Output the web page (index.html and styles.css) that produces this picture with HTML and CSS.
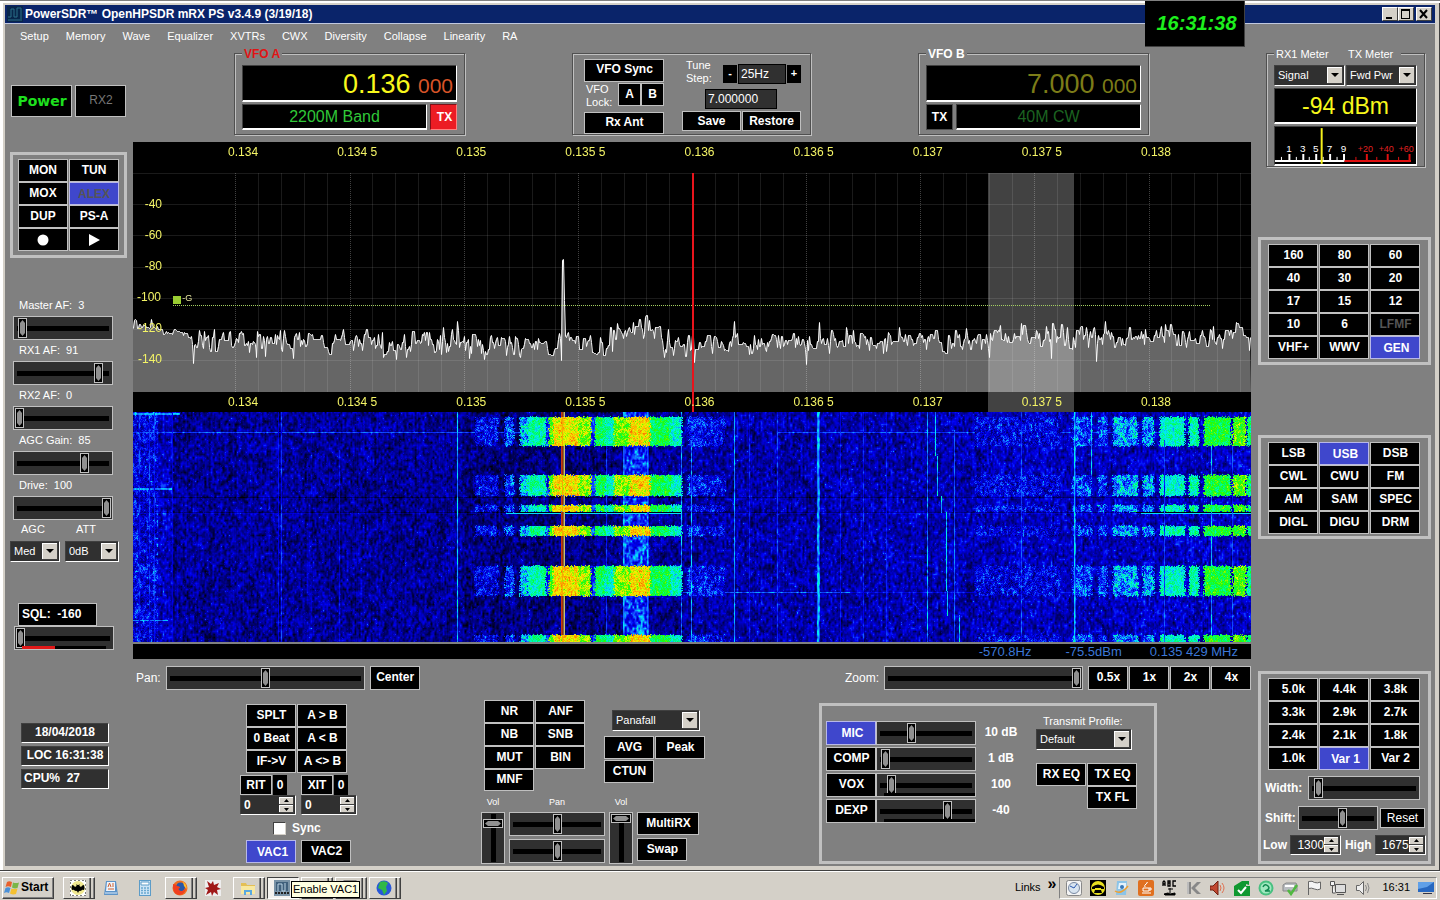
FILE: index.html
```html
<!DOCTYPE html>
<html lang="en">
<head>
<meta charset="utf-8">
<title>PowerSDR OpenHPSDR mRX PS v3.4.9</title>
<link rel="stylesheet" href="styles.css">
</head>
<body>
<div class="window">
  <header class="titlebar">
    <svg class="appicon" viewBox="0 0 16 16"><rect width="16" height="16" fill="#08254a"/><path d="M1 11h3V3h3v8h3V2h4v11" fill="none" stroke="#2a7088"/><path d="M1 14h14" stroke="#2a7088"/></svg>
    <h1>PowerSDR™ OpenHPSDR mRX PS v3.4.9 (3/19/18)</h1>
    <div class="winbtns">
      <button aria-label="Minimize"><svg viewBox="0 0 13 12"><path d="M3 9h6v2H3z"/></svg></button>
      <button aria-label="Maximize"><svg viewBox="0 0 13 12"><path d="M2 1h9v10H2zM3 3v7h7V3z" fill-rule="evenodd"/></svg></button>
      <button class="close" aria-label="Close"><svg viewBox="0 0 13 12"><path d="M3 2l7 8M10 2l-7 8" stroke="#000" stroke-width="2"/></svg></button>
    </div>
    <div class="clock">16:31:38</div>
  </header>
  <div class="client">
    <nav class="menu"><a href="#">Setup</a><a href="#">Memory</a><a href="#">Wave</a><a href="#">Equalizer</a><a href="#">XVTRs</a><a href="#">CWX</a><a href="#">Diversity</a><a href="#">Collapse</a><a href="#">Linearity</a><a href="#">RA</a></nav>

    <aside class="left">
      <div class="powerrow"><button class="b power">Power</button><button class="b rx2">RX2</button></div>
      <div class="panel leftpanel"><div class="grid two">
        <button class="b">MON</button><button class="b">TUN</button>
        <button class="b">MOX</button><button class="b on dim">ALEX</button>
        <button class="b">DUP</button><button class="b">PS-A</button>
        <button class="b" aria-label="Record"><svg width="12" height="12"><circle cx="6" cy="6" r="5.5" fill="#fff"/></svg></button><button class="b" aria-label="Play"><svg width="12" height="12"><path d="M1 0l11 6-11 6z" fill="#fff"/></svg></button>
      </div></div>
      <div class="sliders">
        <label for="maf">Master AF:&nbsp; 3</label><input id="maf" type="range" value="3">
        <label for="r1af">RX1 AF:&nbsp; 91</label><input id="r1af" type="range" value="91">
        <label for="r2af">RX2 AF:&nbsp; 0</label><input id="r2af" type="range" value="0">
        <label for="agcg">AGC Gain:&nbsp; 85</label><input id="agcg" type="range" min="-20" max="120" value="85">
        <label for="drv">Drive:&nbsp; 100</label><input id="drv" type="range" value="100">
      </div>
      <div class="agc">
        <label>AGC<select><option>Med</option></select></label>
        <label>ATT<select><option>0dB</option></select></label>
      </div>
      <div class="sql">
        <button class="b">SQL:&nbsp; -160</button>
        <div class="levelwrap"><input type="range" aria-label="Squelch" value="0"><i class="level"></i></div>
      </div>
      <div class="status"><output class="mid">18/04/2018</output><output class="mid">LOC 16:31:38</output><output>CPU%&nbsp; 27</output></div>
    </aside>

    <main class="center">
      <div class="vforow">
        <section class="group vfo">
          <span class="legend red">VFO A</span>
          <div class="lcd freq">0.136 <small>000</small></div>
          <div class="bandrow"><div class="lcd band">2200M Band</div><button class="b tx hot">TX</button></div>
        </section>
        <section class="group tune">
          <div class="tleft">
            <button class="b">VFO Sync</button>
            <div class="lock"><span>VFO<br>Lock:</span><button class="b">A</button><button class="b">B</button></div>
            <button class="b rxant">Rx Ant</button>
          </div>
          <div class="tright">
            <div class="step"><label for="stp">Tune<br>Step:</label><button class="b">-</button><input id="stp" value="25Hz"><button class="b">+</button></div>
            <input class="mem" aria-label="Memory frequency" value="7.000000">
            <div class="save"><button class="b">Save</button><button class="b">Restore</button></div>
          </div>
        </section>
        <section class="group vfo vfob">
          <span class="legend">VFO B</span>
          <div class="lcd freq">7.000 <small>000</small></div>
          <div class="bandrow"><button class="b tx">TX</button><div class="lcd band">40M CW</div></div>
        </section>
      </div>

      <div class="scope">
        <canvas id="spectrum" width="1118" height="270"></canvas>
        <div class="overlay">
          <div class="axis"><span>0.134</span><span>0.134 5</span><span>0.135</span><span>0.135 5</span><span>0.136</span><span>0.136 5</span><span>0.137</span><span>0.137 5</span><span>0.138</span></div>
          <div class="dbs"><span>-40</span><span>-60</span><span>-80</span><span>-100 <em>-G</em></span><span>-120</span><span>-140</span></div>
          <div class="axis low"><span>0.134</span><span>0.134 5</span><span>0.135</span><span>0.135 5</span><span>0.136</span><span>0.136 5</span><span>0.137</span><span>0.137 5</span><span>0.138</span></div>
        </div>
      </div>
      <canvas id="waterfall" width="1118" height="230"></canvas>
      <div class="readout"><span>-570.8Hz</span><span>-75.5dBm</span><span>0.135 429 MHz</span></div>

      <div class="panrow">
        <label for="pan">Pan:</label><input id="pan" type="range"><button class="b">Center</button>
        <label class="zoomlabel" for="zoom">Zoom:</label><input id="zoom" type="range" value="100">
        <div class="zoombtns"><button class="b">0.5x</button><button class="b">1x</button><button class="b">2x</button><button class="b">4x</button></div>
      </div>

      <div class="bottom">
        <section class="split">
          <div class="grid two">
            <button class="b">SPLT</button><button class="b">A &gt; B</button>
            <button class="b">0 Beat</button><button class="b">A &lt; B</button>
            <button class="b">IF-&gt;V</button><button class="b">A &lt;&gt; B</button>
          </div>
          <div class="rits">
            <div><button class="b">RIT</button><button class="b zero">0</button><input class="spin" aria-label="RIT" value="0"></div>
            <div><button class="b">XIT</button><button class="b zero">0</button><input class="spin" aria-label="XIT" value="0"></div>
          </div>
          <label class="sync"><input type="checkbox">Sync</label>
          <div class="vacs"><button class="b on">VAC1</button><button class="b">VAC2</button></div>
        </section>

        <section class="dsp">
          <div class="dsptop">
            <div class="grid two nr">
              <button class="b">NR</button><button class="b">ANF</button>
              <button class="b">NB</button><button class="b">SNB</button>
              <button class="b">MUT</button><button class="b">BIN</button>
              <button class="b">MNF</button>
            </div>
            <div class="disp">
              <select aria-label="Display mode"><option>Panafall</option></select>
              <div class="grid two"><button class="b">AVG</button><button class="b">Peak</button><button class="b">CTUN</button></div>
            </div>
          </div>
          <div class="multi">
            <div class="col"><label for="v1">Vol</label><input id="v1" class="vert" type="range" value="86"></div>
            <div class="col pans"><label for="p1">Pan</label><input id="p1" type="range"><input type="range" aria-label="Sub pan"></div>
            <div class="col"><label for="v2">Vol</label><input id="v2" class="vert" type="range" value="100"></div>
            <div class="col swap"><button class="b">MultiRX</button><button class="b">Swap</button></div>
          </div>
        </section>

        <section class="panel txpanel">
          <div class="mics">
            <button class="b on">MIC</button><input type="range" aria-label="Mic gain" value="33"><output>10 dB</output>
            <button class="b">COMP</button><input type="range" aria-label="Compression" value="4"><output>1 dB</output>
            <button class="b">VOX</button><div class="levelwrap"><input type="range" aria-label="VOX level" value="10"><i class="level plain"></i></div><output>100</output>
            <button class="b">DEXP</button><div class="levelwrap"><input type="range" aria-label="Expander level" value="75"><i class="level plain"></i></div><output>-40</output>
          </div>
          <div class="profile">
            <label for="prof">Transmit Profile:</label>
            <select id="prof"><option>Default</option></select>
            <div class="grid two"><button class="b">RX EQ</button><button class="b">TX EQ</button><button class="b second">TX FL</button></div>
          </div>
        </section>
      </div>
    </main>

    <aside class="right">
      <section class="group meter">
        <span class="legend thin">RX1 Meter</span><span class="legend thin txm">TX Meter</span>
        <div class="selrow"><select aria-label="RX1 Meter"><option>Signal</option></select><select aria-label="TX Meter"><option>Fwd Pwr</option></select></div>
        <div class="lcd dbm">-94 dBm</div>
        <div class="lcd gauge">
          <svg viewBox="0 0 142 37">
            <path d="M0 34h70M14.500 34v-7M28.500 34v-7M41.500 34v-7M55.500 34v-7M69.500 34v-7" stroke="#fff" stroke-width="2"/>
            <path d="M6.500 34v-4M21.500 34v-4M34.500 34v-4M48.500 34v-4M62.500 34v-4" stroke="#fff"/>
            <path d="M70 34h67M92.500 34v-7M113.500 34v-7M135.500 34v-7" stroke="#e01010" stroke-width="2"/>
            <path d="M81.500 34v-4M102.500 34v-4M124.500 34v-4" stroke="#e01010"/>
            <g class="w"><text x="14" y="25">1</text><text x="28" y="25">3</text><text x="41" y="25">5</text><text x="55" y="25">7</text><text x="69" y="25">9</text></g>
            <g class="r"><text x="91" y="25">+20</text><text x="112" y="25">+40</text><text x="132" y="25">+60</text></g>
            <path d="M47 1v36" stroke="#f4f01c" stroke-width="2"/>
          </svg>
        </div>
      </section>
      <div class="panel bands"><div class="grid three">
        <button class="b">160</button><button class="b">80</button><button class="b">60</button>
        <button class="b">40</button><button class="b">30</button><button class="b">20</button>
        <button class="b">17</button><button class="b">15</button><button class="b">12</button>
        <button class="b">10</button><button class="b">6</button><button class="b dim">LFMF</button>
        <button class="b">VHF+</button><button class="b">WWV</button><button class="b on">GEN</button>
      </div></div>
      <div class="panel modes"><div class="grid three">
        <button class="b">LSB</button><button class="b on">USB</button><button class="b">DSB</button>
        <button class="b">CWL</button><button class="b">CWU</button><button class="b">FM</button>
        <button class="b">AM</button><button class="b">SAM</button><button class="b">SPEC</button>
        <button class="b">DIGL</button><button class="b">DIGU</button><button class="b">DRM</button>
      </div></div>
      <div class="panel filters"><div class="grid three">
        <button class="b">5.0k</button><button class="b">4.4k</button><button class="b">3.8k</button>
        <button class="b">3.3k</button><button class="b">2.9k</button><button class="b">2.7k</button>
        <button class="b">2.4k</button><button class="b">2.1k</button><button class="b">1.8k</button>
        <button class="b">1.0k</button><button class="b on">Var 1</button><button class="b">Var 2</button>
      </div>
        <div class="frow width"><label for="wid">Width:</label><input id="wid" type="range" value="4"></div>
        <div class="frow shift"><label for="shf">Shift:</label><input id="shf" type="range" value="56"><button class="b reset">Reset</button></div>
        <div class="frow lohi"><label for="lo">Low</label><input id="lo" class="spin" value="1300"><label for="hi">High</label><input id="hi" class="spin" value="1675"></div>
      </div>
    </aside>
  </div>
</div>

<footer class="taskbar">
  <button class="task start"><svg viewBox="0 0 16 16"><path d="M3 2q2-1.500 5 0L7 7Q4 5.500 1.500 7z" fill="#e8602c"/><path d="M9 2.500q3 1 6 0L13.500 8q-3 1-5.500-.5z" fill="#7ab648"/><path d="M1.500 8q2.500-1.500 5 0L5 13q-2.500-1.500-5 0z" fill="#4a90d8"/><path d="M7.500 8.500q3 1 6 0L12 14q-3 1-6-.5z" fill="#f4c030"/></svg>Start</button>
  <div class="tasks">
    <button class="task stack" aria-label="Batman"><svg viewBox="0 0 16 16"><rect width="16" height="16" fill="#fff" stroke="#000" stroke-dasharray="2 2"/><circle cx="8" cy="8" r="7" fill="#f0e890"/><path d="M2 5q2 0 3 2l1.500-1V4l1 1h1l1-1v2L11 7q1-2 3-2 1 3 0 5-2-1-3 1-2-1-3 2-1-3-3-2-1-2-3-1-1-2 0-5z"/></svg></button>
    <button class="flat" aria-label="WordPad"><svg viewBox="0 0 16 16"><path d="M3 1h10l2 14H1z" fill="#5c93c8"/><path d="M4 2h8v9H3z" fill="#eef4fb"/><path d="M5 7l1.500-4L8 7M9 4h2M9 6h2M5 9h6" stroke="#d06030" fill="none"/><path d="M2 13h12" stroke="#dcebfa"/></svg></button>
    <button class="flat" aria-label="Calculator"><svg viewBox="0 0 16 16"><rect x="2.500" y=".5" width="11" height="15" fill="#cde4f5" stroke="#5c9cc8"/><path d="M4 2h8v3H4z" fill="#fff" stroke="#5c9cc8"/><path d="M4 8h8M4 10.500h8M4 13h8" stroke="#6aa8d0" stroke-width="1.500" stroke-dasharray="2 1"/></svg></button>
    <button class="task stack" aria-label="Firefox"><svg viewBox="0 0 16 16"><circle cx="8" cy="8" r="7.500" fill="#f07020"/><circle cx="8.500" cy="7" r="4.500" fill="#2858a8"/><path d="M1 4q3 0 4 2 3 0 3 2-2 0-1 2 3 3 7-2-1 7-7 7Q0 14 1 4z" fill="#f04020"/><path d="M10 1q5 3 4.500 8L12 6q0-3-2-5z" fill="#fcc030"/></svg></button>
    <button class="flat" aria-label="IrfanView"><svg viewBox="0 0 16 16"><rect width="16" height="16" fill="#eee"/><path d="M2 1l4 3 2-3 1 4 5-2-2 4 4 2-4 1 1 5-4-3-2 4-1-4-5 3 2-5-3-2 4-1z" fill="#a01818"/></svg></button>
    <button class="task stack" aria-label="Explorer"><svg viewBox="0 0 16 16"><path d="M1 3h5l1 2h8v9H1z" fill="#e4bf55"/><path d="M1 6h14v8H1z" fill="#f8e8a0"/><path d="M4 15v-5h8v5h-2v-3H6v3z" fill="#58a8e0"/></svg></button>
    <button class="task pressed" aria-label="PowerSDR"><svg viewBox="0 0 16 16"><rect width="16" height="16" fill="#7a93a6"/><path d="M2 2h12v9H2z" fill="#40607c"/><path d="M4 11V4h4v7h3V3" stroke="#bcd4e4" fill="none"/><path d="M1 13h14" stroke="#222" stroke-width="2" stroke-dasharray="2 1"/></svg></button>
    <button class="task stack" aria-label="Google Earth"><svg viewBox="0 0 16 16"><circle cx="8" cy="8" r="7" fill="#1030a0"/><path d="M3 3q5-3 7 0l-3 4z" fill="#28a828"/></svg></button>
    <button class="task stack" aria-label="Help"><svg viewBox="0 0 16 16"><rect x="2" y="1" width="12" height="14" fill="#fff" stroke="#333"/><path d="M6 5q2-2 4 0t-2 4" stroke="#000" stroke-width="1.500" fill="none"/></svg></button>
    <button class="task stack" aria-label="Browser"><svg viewBox="0 0 16 16"><circle cx="8" cy="8" r="7.500" fill="#2858d8"/><path d="M4 2q5-2 8 1l-2 4 1 4-3 4-2-5-4-2z" fill="#30b848"/></svg></button>
    <span class="tip" role="tooltip">Enable VAC1</span>
  </div>
  <a class="links" href="#">Links</a><b class="chev">»</b>
  <div class="tray">
    <svg viewBox="0 0 16 16"><rect x=".5" y=".5" width="15" height="15" rx="2" fill="#f4f4f4" stroke="#888"/><circle cx="8" cy="8" r="5.500" fill="#d8e4f0" stroke="#7888a0"/><path d="M8 8l3-4M8 8L4 6" stroke="#2858b0"/></svg>
    <svg viewBox="0 0 16 16"><rect width="16" height="16"/><circle cx="8" cy="8" r="7" fill="#e8e020"/><path d="M2 7q6-5 12 0v2h-3V8H5v1H2zM5 10h6l1 3H4z"/></svg>
    <svg viewBox="0 0 16 16"><path d="M3 1h10l-1 14H2z" fill="#8cc4e8"/><path d="M5 3h7v6H4z" fill="#e4f2fc"/><path d="M1 11q6 4 13-5" stroke="#f0a030" stroke-width="1.500" fill="none"/><circle cx="8" cy="7" r="2" fill="#3878b8"/></svg>
    <svg viewBox="0 0 16 16"><rect width="16" height="16" rx="2" fill="#e07020"/><path d="M5 8h6v3H5zM11 8h2v2h-2M4 13h9M7 7q-1-2 1-3t1-2" stroke="#fff" fill="none"/></svg>
    <svg viewBox="0 0 16 16"><path d="M1 6V2l1-1 1 1v4M1 4h2M6 1v5h2V1zM6 3h2M14 1h-3v5h3" stroke="#000" fill="none" stroke-width="1.300"/><path d="M8 8v5M6 9h5M2 14l4-1 2 1 5-1v2H3z" stroke="#000"/></svg>
    <svg viewBox="0 0 16 16"><path d="M1 2h4v12H1zM5 8l6-6h4L9 8l6 6h-4z" fill="#888"/><path d="M1 2h2v12H1z" fill="#bbb"/></svg>
    <svg viewBox="0 0 16 16"><path d="M0 6h3l5-5v14l-5-5H0z" fill="#c04830" stroke="#702010"/><path d="M10 5q2 3 0 6M12 3q4 5 0 10" stroke="#e07050" fill="none"/></svg>
    <svg viewBox="0 0 16 16"><path d="M0 6l8-5h7v4l-3-1v2h4v10H0z" fill="#109830"/><path d="M4 10l3 3 5-6" stroke="#fff" stroke-width="2" fill="none"/></svg>
    <svg viewBox="0 0 16 16"><circle cx="8" cy="8" r="7.500" fill="#48c080"/><circle cx="8" cy="8" r="5.500" fill="#a0e8c0"/><path d="M5 7q2-4 5-1t-3 5h5" stroke="#108850" stroke-width="1.500" fill="none"/></svg>
    <svg viewBox="0 0 16 16"><path d="M1 5l3-2h10l1 2v6H1z" fill="#b8bcc0" stroke="#888"/><path d="M3 6h9" stroke="#fff" stroke-width="2"/><path d="M6 10l3 4 6-9" stroke="#50b840" stroke-width="2.500" fill="none"/></svg>
    <svg viewBox="0 0 16 16"><path d="M2.500 15V1.500q4-1 6 1 3 1 6-.5v7q-3 1.500-6 0-3-1.500-6-.5" fill="#f4f4f4" stroke="#666"/></svg>
    <svg viewBox="0 0 16 16"><path d="M5.500 4.500h10v8h-10zM7 14.500h7" fill="#ddd" stroke="#555"/><path d="M.5 1.500h4v4h-4zM2.500 5v8h3" fill="#f4f4f4" stroke="#555"/></svg>
    <svg viewBox="0 0 16 16"><path d="M2.500 5.500h3l4-4v13l-4-4h-3z" fill="#eee" stroke="#666"/><path d="M11.500 5q2 3 0 6M13.500 3q3 5 0 10" stroke="#888" fill="none"/></svg>
    <time>16:31</time>
    <svg viewBox="0 0 16 16"><path d="M0 2h16v10H0z" fill="#2868c0"/><path d="M0 2h16l-7 5-9 2z" fill="#60a0e8"/><path d="M5 13h9v1H5z" fill="#334"/></svg>
  </div>
</footer>
<script src="scope.js"></script>
</body>
</html>
```
FILE: styles.css
```css
* { box-sizing: border-box; }
body {
  margin: 0; min-height: 100vh; display: flex; flex-direction: column;
  background: #d4d0c8; color: #fff; overflow: hidden;
  font: 12px/13px "Liberation Sans", Arial, sans-serif;
}
button, input, select, output { font: inherit; color: inherit; margin: 0; }
a { color: inherit; text-decoration: none; }

.window {
  flex: 1; padding: 5px 5px 4px; display: flex; flex-direction: column; background: #d4d0c8;
  border-bottom: 1px solid #404040;
  box-shadow: inset 0 1px #808080, inset 3px 3px #fff, inset -1px 0 #404040;
}
.titlebar { position: relative; display: flex; align-items: center; height: 19px; background: #0a246a; border-bottom: 1px solid #c0c8e0; padding: 0 3px 0 2px; }
.titlebar h1 { flex: 1; margin: 0 0 0 2px; font: bold 12px/18px "Liberation Sans", Arial, sans-serif; }
.appicon { width: 16px; height: 16px; }
.winbtns { display: flex; }
.winbtns button { width: 16px; height: 14px; padding: 0; background: #d4d0c8; border: 1px solid; border-color: #fff #404040 #404040 #fff; }
.winbtns .close { margin-left: 2px; }
.winbtns svg { display: block; width: 13px; height: 12px; }
.clock {
  position: absolute; top: -4px; right: 190px; width: 100px; height: 46px; padding-left: 4px;
  background: #000; border: 1px solid #404040; border-width: 0 1px 1px 0; color: #1df01d; text-align: center;
  font: italic bold 20px/44px "Liberation Sans", Arial, sans-serif;
}

.client { flex: 1; display: grid; grid-template-columns: 128px 1fr 184px; grid-template-rows: 24px 1fr; background: #808080; }
.menu { grid-column: 1 / -1; display: flex; gap: 17px; padding: 5px 15px; font-size: 11px; line-height: 14px; }

.b {
  height: 23px; padding: 0 0 1px 1px; border: 1px solid #c0c0c0; border-radius: 0;
  background: #000; color: #fff; font-weight: bold; white-space: nowrap; overflow: hidden;
}
.b svg { display: block; margin: 1px auto 0; }
.b.on { background: #3f47cc; border-color: #b8b8e8; padding: 1px 0 0 3px; }
.b.dim { color: #555; }
.grid { display: grid; column-gap: 1px; grid-auto-rows: 23px; }
.two { grid-template-columns: 50px 50px; }
.three { grid-template-columns: repeat(3, 50px); }
.second { grid-column: 2; }
.panel { border: 3px solid #c0c0c0; }
.group { position: relative; border: 1px solid #505050; box-shadow: 1px 1px #c0c0c0, inset 1px 1px #c0c0c0; }
.legend { position: absolute; top: -6px; left: 7px; padding: 0 2px; background: #808080; font-weight: bold; }
.legend.red { color: #e01414; }
.legend.thin { font-weight: normal; font-size: 11px; }
.lcd { background: #000; border: 1px solid; border-color: #404040 #fff #fff #404040; border-bottom-width: 2px; }

select {
  appearance: none; height: 21px; padding: 0 20px 0 3px; border: 1px solid; border-color: #404040 #fff #fff #404040; border-radius: 0;
  background: #303030 url("data:image/svg+xml,%3Csvg xmlns='http://www.w3.org/2000/svg' width='16' height='17'%3E%3Cpath fill='%23404040' d='M0 0h16v17H0z'/%3E%3Cpath fill='%23fff' d='M0 0h15v16H0z'/%3E%3Cpath fill='%23d4d0c8' d='M1 1h14v15H1z'/%3E%3Cpath d='M4 6h8L8 10z'/%3E%3C/svg%3E") right 1px center no-repeat;
  font-size: 11px;
}
.spin {
  height: 20px; width: 56px; padding: 0 18px 0 3px; border: 1px solid; border-color: #404040 #fff #fff #404040;
  background: #303030 url("data:image/svg+xml,%3Csvg xmlns='http://www.w3.org/2000/svg' width='15' height='16'%3E%3Cpath fill='%23404040' d='M0 0h15v8H0zM0 8h15v8H0z'/%3E%3Cpath fill='%23fff' d='M0 0h14v7H0zM0 8h14v7H0z'/%3E%3Cpath fill='%23d4d0c8' d='M1 1h13v6H1zM1 9h13v6H1z'/%3E%3Cpath d='M5 5h5L7.500 2zM5 11h5l-2.500 3z'/%3E%3C/svg%3E") right 1px center no-repeat;
}

input[type="range"] { appearance: none; height: 24px; width: 100px; padding: 0 1px; border: 1px solid #c0c0c0; background: #303030; display: block; }
input[type="range"]::-webkit-slider-runnable-track { height: 5px; background: linear-gradient(90deg, #303030 2px, #000 2px, #000 calc(100% - 2px), #303030 calc(100% - 2px)); }
input[type="range"]::-webkit-slider-thumb {
  appearance: none; width: 9px; height: 20px; margin-top: -8px; border: 1px solid #c0c0c0; border-radius: 0;
  background: #000 url("data:image/svg+xml,%3Csvg xmlns='http://www.w3.org/2000/svg' width='5' height='16'%3E%3Cpath fill='%23909090' d='M0 3l2.500-3L5 3v10l-2.500 3L0 13z'/%3E%3C/svg%3E") center no-repeat;
}
input[type="range"].vert { writing-mode: vertical-lr; direction: rtl; width: 24px; height: 52px; padding: 1px 0; }
input[type="range"].vert::-webkit-slider-runnable-track { width: 5px; height: auto; background: #000; }
input[type="range"].vert::-webkit-slider-thumb {
  width: 20px; height: 9px; margin: 0 0 0 -8px;
  background: #000 url("data:image/svg+xml,%3Csvg xmlns='http://www.w3.org/2000/svg' width='16' height='5'%3E%3Cpath fill='%23909090' d='M3 0L0 2.500 3 5h10l3-2.500L13 0z'/%3E%3C/svg%3E") center no-repeat;
}
.levelwrap { position: relative; }
.level { position: absolute; left: 8px; right: 8px; bottom: 1px; height: 3px; background: linear-gradient(90deg, #e01818 33px, #000 33px); }
.level.plain { right: 1px; background: #000; }

.left { padding: 37px 0 0 5px; display: flex; flex-direction: column; align-items: flex-start; }
.powerrow { display: flex; gap: 3px; padding-left: 1px; }
.powerrow .b { height: 32px; width: 51px; color: #777; font-weight: normal; }
.powerrow .power { width: 61px; color: #1ee01e; font: bold 14px "DejaVu Sans", Verdana, sans-serif; }
.leftpanel { margin: 35px 0 37px; padding: 4px 5px; width: 117px; }
.leftpanel .b { padding-left: 0; }
.sliders { display: flex; flex-direction: column; padding-left: 3px; font-size: 11px; }
.sliders label { padding: 4px 0 2px 6px; height: 21px; }
.agc { display: flex; gap: 5px; margin-top: 2px; font-size: 11px; }
.agc label { display: flex; flex-direction: column; gap: 5px; padding-top: 1px; text-indent: 11px; }
.agc select { width: 50px; text-indent: 0; }
.agc label + label select { width: 54px; }
.sql { margin: 41px 0 73px 4px; }
.sql .b { width: 79px; margin-left: 4px; display: block; text-align: left; padding-left: 3px; }
.status { display: flex; flex-direction: column; gap: 3px; margin-left: 11px; font-weight: bold; }
.status output { width: 88px; height: 20px; padding: 2px; background: #303030; border: 1px solid; border-color: #404040 #fff #fff #404040; white-space: nowrap; }
.status .mid { text-align: center; padding: 2px 0; }

.center { min-width: 0; display: flex; flex-direction: column; }
.vforow { display: flex; justify-content: space-between; padding: 5px 102px 0 101px; height: 94px; }
.vforow .group { height: 82px; }
.vfo { width: 231px; padding: 11px 7px 0; }
.freq { height: 37px; padding-right: 3px; text-align: right; font-size: 27px; line-height: 37px; color: #f8f81c; white-space: nowrap; }
.freq small { font-size: 21px; color: #d85428; }
.vfob .freq, .vfob .freq small { color: #7c7c18; }
.bandrow { display: flex; gap: 3px; margin-top: 2px; }
.band { flex: 1; height: 26px; text-align: center; font-size: 16px; line-height: 24px; color: #30c838; }
.vfob .band { color: #1c6420; }
.tx { width: 27px; height: 26px; border-color: #505050; padding: 0; }
.tx.hot { background: #ec1c24; border-color: #801018 #ff8080 #ff8080 #801018; padding-left: 2px; }
.tune { width: 239px; padding: 5px 9px 0 11px; display: flex; gap: 18px; }
.tleft { width: 80px; display: flex; flex-direction: column; }
.lock { display: flex; margin: 1px 0 3px; }
.lock span { flex: 1; padding-left: 2px; font-size: 11px; }
.lock .b { width: 23px; padding: 0; }
.tright { flex: 1; display: flex; flex-direction: column; }
.step { display: flex; align-items: center; gap: 1px; height: 29px; font-size: 11px; }
.step label { flex: 1; padding: 0 0 3px 4px; }
.step .b { width: 14px; height: 18px; padding: 0; border-color: #000; }
.tune input { background: #303030; border: 1px solid #000; height: 20px; padding: 0 2px; width: 48px; font-size: 12px; }
.tune .mem { width: 72px; margin: 1px 0 2px 23px; }
.save { display: flex; gap: 1px; }
.save .b { flex: 1; height: 20px; padding: 0; }

.scope { display: grid; background: #000; }
.scope > * { grid-area: 1 / 1; }
canvas { display: block; width: 100%; }
#spectrum { height: 270px; }
#waterfall { height: 230px; }
.overlay { z-index: 1; display: flex; flex-direction: column; color: #f4f466; }
.axis { display: grid; grid-template-columns: repeat(9, 1fr); padding: 4px 38px 0 53px; height: 46px; text-align: center; }
.axis.low { height: 20px; margin-top: auto; }
.dbs { display: flex; flex-direction: column; gap: 18px; padding-top: 10px; }
.dbs span { width: 29px; text-align: right; white-space: nowrap; height: 13px; }
.dbs span:nth-child(4) { width: 60px; text-align: left; padding-left: 4px; }
.dbs em { font: 9px "Liberation Sans", Arial, sans-serif; padding-left: 18px; color: #e8e8a0; }
.readout { display: flex; justify-content: flex-end; gap: 34px; height: 17px; padding-right: 13px; border-top: 2px solid #808080; background: #000; color: #3c78d8; font-size: 13px; line-height: 16px; }
.readout span:last-child { margin-left: -6px; }

.panrow { display: flex; align-items: center; margin-top: 7px; padding-left: 3px; height: 24px; }
.panrow input { width: 199px; margin: 0 5px; }
.panrow .b { width: 50px; height: 24px; }
.zoomlabel { margin-left: auto; }
.zoombtns { display: flex; gap: 1px; }
.zoombtns .b { width: 40px; }

.bottom { display: flex; justify-content: space-between; align-items: flex-start; padding: 10px 94px 0 107px; }
.split { width: 117px; padding-top: 4px; }
.split > .grid { margin-left: 6px; }
.rits { display: flex; gap: 5px; margin-top: 2px; }
.rits div { display: grid; grid-template-columns: 32px 14px 8px; column-gap: 1px; }
.rits .b { height: 20px; padding: 0; }
.rits .zero { border-color: #000; }
.rits .spin { grid-column: 1 / -1; font-weight: bold; }
.sync { display: flex; align-items: center; gap: 6px; margin: 7px 0 5px 33px; font-weight: bold; }
.sync input { appearance: none; width: 13px; height: 13px; background: #fff; border: 1px solid; border-color: #404040 #d4d0c8 #d4d0c8 #404040; }
.vacs { display: flex; gap: 5px; margin-left: 6px; }
.vacs .b { width: 50px; }
.dsp { width: 224px; margin-left: 10px; }
.dsptop { display: flex; gap: 19px; padding-left: 3px; height: 96px; }
.nr .b:last-child { height: 22px; }
.disp { padding-top: 10px; }
.disp select { display: block; width: 88px; margin: 0 0 5px 8px; }
.disp .grid { row-gap: 1px; }
.multi { display: flex; gap: 4px; font-size: 9px; }
.col { display: flex; flex-direction: column; width: 24px; }
.col label { height: 16px; text-align: center; }
.pans { width: 96px; }
.pans input { width: 96px; margin-bottom: 3px; }
.swap { width: 62px; padding-top: 16px; gap: 3px; font-size: 12px; }
.swap .b + .b { width: 50px; }
.txpanel { width: 338px; height: 161px; margin-top: 3px; padding: 9px 4px 0; display: flex; gap: 10px; }
.mics { display: grid; grid-template-columns: 50px 100px 50px; grid-auto-rows: 24px; row-gap: 2px; align-items: center; font-weight: bold; padding-top: 6px; align-content: start; }
.mics .b { height: 24px; }
.mics output { text-align: center; padding-bottom: 2px; white-space: nowrap; }
.profile { font-size: 12px; }
.profile label { display: block; padding-left: 7px; height: 14px; font-size: 11px; }
.profile select { display: block; width: 96px; margin-bottom: 13px; }

.right { padding: 5px 0 0 7px; }
.meter { width: 159px; height: 114px; margin-left: 8px; padding: 11px 7px 0; font-size: 12px; }
.legend:has(+ .txm) { padding-right: 20px; }
.legend.txm { left: 79px; padding-right: 8px; }
.selrow { display: flex; gap: 1px; }
.selrow select { flex: 1; min-width: 0; padding-right: 16px; }
.dbm { height: 36px; margin-top: 2px; text-align: center; font-size: 23px; line-height: 34px; color: #f8f81c; }
.gauge { height: 40px; margin-top: 2px; }
.gauge svg { display: block; width: 100%; height: 37px; }
.gauge text { font: 9px "Liberation Sans", Arial, sans-serif; text-anchor: middle; }
.gauge .w text { fill: #fff; font-size: 10px; }
.gauge .r text { fill: #e02020; }
.right .panel { width: 173px; padding: 4px 7px 0; }
.bands { margin-top: 70px; height: 128px; }
.modes { margin-top: 70px; height: 104px; }
.filters { margin-top: 132px; height: 193px; }
.frow { display: flex; align-items: center; margin: 0 -7px; padding-left: 4px; font-weight: bold; }
.width { margin-top: 6px; }
.width input { width: 112px; margin-left: auto; margin-right: 8px; }
.shift { margin-top: 6px; }
.shift input { width: 80px; margin-left: auto; margin-right: 2px; }
.reset { width: 45px; height: 20px; margin-right: 3px; font-weight: normal; padding: 0; }
.lohi { margin-top: 5px; padding-left: 2px; justify-content: space-between; padding-right: 2px; }
.lohi .spin { width: 51px; font-weight: normal; padding: 0 15px 0 6px; }

.taskbar { display: flex; align-items: center; height: 30px; padding: 2px 3px 0 2px; border-top: 1px solid #fff; color: #000; }
.task { height: 22px; padding: 0; background: #d4d0c8; border: 1px solid; border-color: #fff #404040 #404040 #fff; box-shadow: inset -1px -1px #808080; }
.task svg, .flat svg, .tray svg { display: block; width: 16px; height: 16px; flex: none; }
.start { width: 52px; display: flex; align-items: center; gap: 1px; padding-left: 1px; font-weight: bold; }
.tasks { position: relative; display: flex; gap: 2px; margin-left: 9px; }
.tasks .task, .flat { width: 32px; display: flex; align-items: center; padding-left: 6px; }
.tasks .stack { box-shadow: inset -1px 0 #808080, inset -3px 0 #d4d0c8, inset -4px 0 #404040, inset -5px 0 #808080; }
.tasks .pressed { background: #f4f2ee; border-color: #404040 #fff #fff #404040; box-shadow: none; }
.flat { height: 22px; border: 0; background: none; padding-right: 0; }
.tip { position: absolute; left: 228px; top: 4px; padding: 1px; height: 17px; background: #ffffe1; border: 1px solid #000; font-size: 11px; white-space: nowrap; }
.links { margin-left: auto; font-size: 11px; }
.chev { margin: -8px 3px 0 7px; font-size: 16px; }
.tray { display: flex; align-items: center; gap: 8px; height: 22px; padding: 0 2px 0 6px; border: 1px solid; border-color: #808080 #fff #fff #808080; font-size: 11px; }
.tray time { padding-left: 4px; }
```
FILE: scope.js
```js
let seed = 20180418;
function rnd() {
  seed = (seed + 0x6d2b79f5) | 0;
  let t = Math.imul(seed ^ (seed >>> 15), 1 | seed);
  t = (t + Math.imul(t ^ (t >>> 7), 61 | t)) ^ t;
  return ((t ^ (t >>> 14)) >>> 0) / 4294967296;
}
const W = 1118;

function drawSpectrum() {
  const g = document.getElementById('spectrum').getContext('2d');
  g.fillStyle = '#000';
  g.fillRect(0, 0, W, 270);

  const spikes = { 60: 363, 61: 345, 81: 329, 147: 330, 123: 357, 132: 356, 263: 359, 324: 321, 325: 330, 427: 338, 428: 360, 429: 260, 430: 259, 431: 300, 432: 336, 500: 322, 512: 317, 601: 321, 673: 364, 686: 322, 918: 358, 963: 361, 1028: 326, 1103: 322, 1116: 350 };
  const ys = [];
  let n = 0;
  for (let x = 0; x < W; x++) {
    const m = x < 70 ? 323 + x * 0.24 : x < 480 ? 342 : x < 530 ? 331 : x < 860 ? 340 : 336;
    if (rnd() > 0.3) n = n * 0.3 + (rnd() + rnd() + rnd() - 1.5) * (x < 60 ? 8 : 12);
    let y = m + n;
    if (x > 70 && rnd() > 0.97) y += 8;
    if (spikes[x]) y = spikes[x];
    ys.push(Math.round(y) - 142);
  }

  g.fillStyle = 'rgba(255,255,255,.26)';
  g.fillRect(855, 31, 86, 239);
  g.beginPath();
  g.moveTo(0, 250);
  ys.forEach((y, x) => g.lineTo(x, y));
  g.lineTo(W, 250);
  g.fillStyle = 'rgba(255,255,255,.4)';
  g.fill();

  g.fillStyle = 'rgba(255,255,255,.1)';
  [31, 62, 93, 125, 156, 187, 218].forEach(y => g.fillRect(0, y, W, 1));
  for (let i = 0; i < 45; i++) {
    const x = Math.round(102.4 + i * 22.83);
    if (x > W) break;
    if (i % 5) { g.fillStyle = 'rgba(255,255,255,.1)'; g.fillRect(x, 31, 1, 219); }
    else { g.fillStyle = 'rgba(255,255,255,.25)'; for (let y = 31; y < 250; y += 2) g.fillRect(x, y, 1, 1); }
  }
  g.strokeStyle = '#fff';
  g.lineWidth = 1;
  g.beginPath();
  ys.forEach((y, x) => g.lineTo(x + 0.5, y + 0.5));
  g.stroke();

  g.fillStyle = '#9acd32';
  g.fillRect(40, 154, 8, 8);
  g.fillStyle = '#a4d060';
  for (let x = 40; x < 1077; x += 2) g.fillRect(x, 163, 1, 1);
  g.fillStyle = '#e8141c';
  g.fillRect(559, 31, 2, 239);
}

const stops = [[0, 0, 0, 0], [0.18, 0, 0, 120], [0.36, 0, 0, 240], [0.46, 20, 90, 255], [0.56, 0, 235, 250], [0.68, 0, 255, 90], [0.75, 40, 250, 0], [0.85, 240, 245, 0], [0.95, 255, 150, 0], [1.05, 230, 40, 0]];
function colour(v) {
  v = Math.max(0, Math.min(1.04, v));
  let i = 1;
  while (v > stops[i][0]) i++;
  const a = stops[i - 1], b = stops[i], t = (v - a[0]) / (b[0] - a[0]);
  return [a[1] + (b[1] - a[1]) * t, a[2] + (b[2] - a[2]) * t, a[3] + (b[3] - a[3]) * t];
}

// Keying bursts: time rows, then level per frequency range
const rows = [[417, 446], [475, 496], [505, 512], [526, 536], [566, 596], [635, 643]];
const levels = [
  [475, 498, 0.34], [505, 514, 0.42], [520, 528, 0.53], [528, 546, 0.62], [549, 553, 0.76], [553, 579, 0.88], [579, 591, 0.8],
  [595, 605, 0.69], [605, 614, 0.61], [614, 630, 0.79], [630, 650, 0.88], [650, 670, 0.69], [670, 682, 0.6], [688, 705, 0.38], [705, 725, 0.34],
  [975, 1060, 0.33], [1072, 1092, 0.42], [1098, 1107, 0.42], [1113, 1138, 0.5], [1143, 1154, 0.5], [1160, 1185, 0.6],
  [1189, 1199, 0.62], [1204, 1231, 0.71], [1233, 1246, 0.76], [1247, 1251, 0.66]
];
// Steady carriers: x, first row, last row, level
const lines = [
  [278, 412, 642, 0.36], [281, 412, 642, 0.4], [457, 412, 642, 0.53], [139, 420, 642, 0.38], [149, 420, 642, 0.39], [154, 412, 642, 0.4], [172, 412, 642, 0.34],
  [606, 440, 642, 0.4], [623, 412, 642, 0.5], [624, 412, 642, 0.47], [647, 412, 642, 0.5], [648, 412, 642, 0.43], [681, 412, 642, 0.48], [691, 440, 642, 0.49], [734, 412, 642, 0.5],
  [749, 412, 642, 0.36], [777, 412, 642, 0.4], [817, 412, 642, 0.48], [818, 412, 642, 0.52], [819, 412, 642, 0.45], [840, 412, 642, 0.36],
  [863, 412, 642, 0.38], [886, 412, 642, 0.38], [927, 412, 642, 0.48], [935, 412, 455, 0.55], [937, 456, 495, 0.55], [941, 496, 512, 0.55],
  [946, 512, 590, 0.55], [947, 591, 615, 0.55], [959, 615, 642, 0.54], [954, 430, 642, 0.45], [339, 450, 642, 0.34], [1021, 412, 642, 0.42],
  [1074, 412, 642, 0.54], [1075, 412, 642, 0.44], [1091, 412, 475, 0.53], [1211, 440, 642, 0.52], [1164, 440, 642, 0.42], [1232, 440, 642, 0.43]
];

// Smooth value noise on a coarse lattice, range -1..1
function blotches(sx, sy) {
  const w = Math.ceil(W / sx) + 2, h = Math.ceil(230 / sy) + 2;
  const v = Float32Array.from({ length: w * h }, () => rnd() * 2 - 1);
  return (x, y) => {
    const gx = x / sx, gy = y / sy, i = gx | 0, j = gy | 0, u = gx - i, t = gy - j, k = j * w + i;
    return (v[k] * (1 - u) + v[k + 1] * u) * (1 - t) + (v[k + w] * (1 - u) + v[k + w + 1] * u) * t;
  };
}

function drawWaterfall() {
  const g = document.getElementById('waterfall').getContext('2d');
  const img = g.createImageData(W, 230);
  const gain = new Float32Array(W), base = new Float32Array(W);
  const fine = blotches(2, 3), mid = blotches(9, 12), grain = blotches(1.5, 1.5);
  levels.forEach(([a, b, v]) => { for (let x = a; x < b; x++) gain[x - 133] = v; });
  for (let x = 0; x < W; x++) {
    base[x] = (x < 40 ? 0.29 : x < 330 ? 0.22 : x < 490 ? 0.19 : x < 560 ? 0.22 : x < 720 ? 0.25 : x < 860 ? 0.26 : 0.28) + (rnd() - 0.5) * 0.05;
  }
  for (let y = 0; y < 230; y++) {
    const Y = y + 412;
    const burst = rows.some(([a, b]) => Y >= a && Y < b);
    for (let x = 0; x < W; x++) {
      const X = x + 133;
      const n = fine(x, y) * 0.13 + grain(x, y) * 0.06 + mid(x, y) * 0.035;
      let v = base[x] + n;
      if (rnd() > 0.985) v += 0.1;
      const jy = Y + Math.round(rnd() * 1.6 - 0.8), hit = rows.some(([a, b]) => jy >= a && jy < b);
      const gv = gain[Math.max(0, Math.min(W - 1, x + Math.round(rnd() * 3 - 1.5)))];
      if (hit && gv) v = gv + fine(x, y) * (gv > 0.57 ? 0.07 : 0.13) + (rnd() - 0.5) * (gv > 0.57 ? 0.12 : 0.2);
      else if (burst && X > 520 && X < 682) v = 0.4 + n;
      else if (X >= 624 && X < 648) v = 0.41 + n * 1.1;
      else if (X < 158 && rnd() > 0.6) v += 0.09;
      if ((Y === 432 && X > 380 || Y === 488 && X < 330) && !burst) v += 0.14;
      if (Y === 432 && (X > 776 || X < 520) && !gv) v = Math.max(v, 0.44 + n * 0.7);
      if (Y === 592 && X > 682 && !gv) v = Math.max(v, (X < 850 ? 0.47 : 0.37) + n * 0.6);
      if (((Y === 413 || Y === 414) && X < 180) || ((Y === 488 || Y === 489) && X < 173) || (Y === 620 && X < 168)) v = Math.max(v, 0.5 + n * 0.6);
      if (Y === 497) v -= 0.1;
      if (Y === 512) v = X > 515 && X < 682 || X > 1135 ? 0.02 : v - 0.07;
      if (Y === 513) v = X > 505 && X < 682 || X > 1140 ? 0.55 : v + 0.05;
      const p = (y * W + x) * 4, c = colour(v);
      img.data[p] = c[0]; img.data[p + 1] = c[1]; img.data[p + 2] = c[2]; img.data[p + 3] = 255;
    }
    for (const [lx, a, b, v] of lines) {
      if (Y < a || Y > b || (burst && (lx > 500 && lx < 682 || lx > 1200))) continue;
      const c = colour(v + fine(lx - 133, y) * 0.1), p = (y * W + lx - 133) * 4;
      img.data[p] = c[0]; img.data[p + 1] = c[1]; img.data[p + 2] = c[2];
    }
    if (!burst) {
      [[561, 190, 60, 20], [562, 165, 45, 10], [563, 130, 110, 60], [564, 200, 190, 120]].forEach(([X, r, gr, b]) => {
        const p = (y * W + X - 133) * 4;
        img.data[p] = r; img.data[p + 1] = gr; img.data[p + 2] = b;
      });
    } else {
      const p = (y * W + 562 - 133) * 4;
      img.data[p] = 245; img.data[p + 1] = 170; img.data[p + 2] = 0;
    }
  }
  g.putImageData(img, 0, 0);
}

drawSpectrum();
drawWaterfall();
```
